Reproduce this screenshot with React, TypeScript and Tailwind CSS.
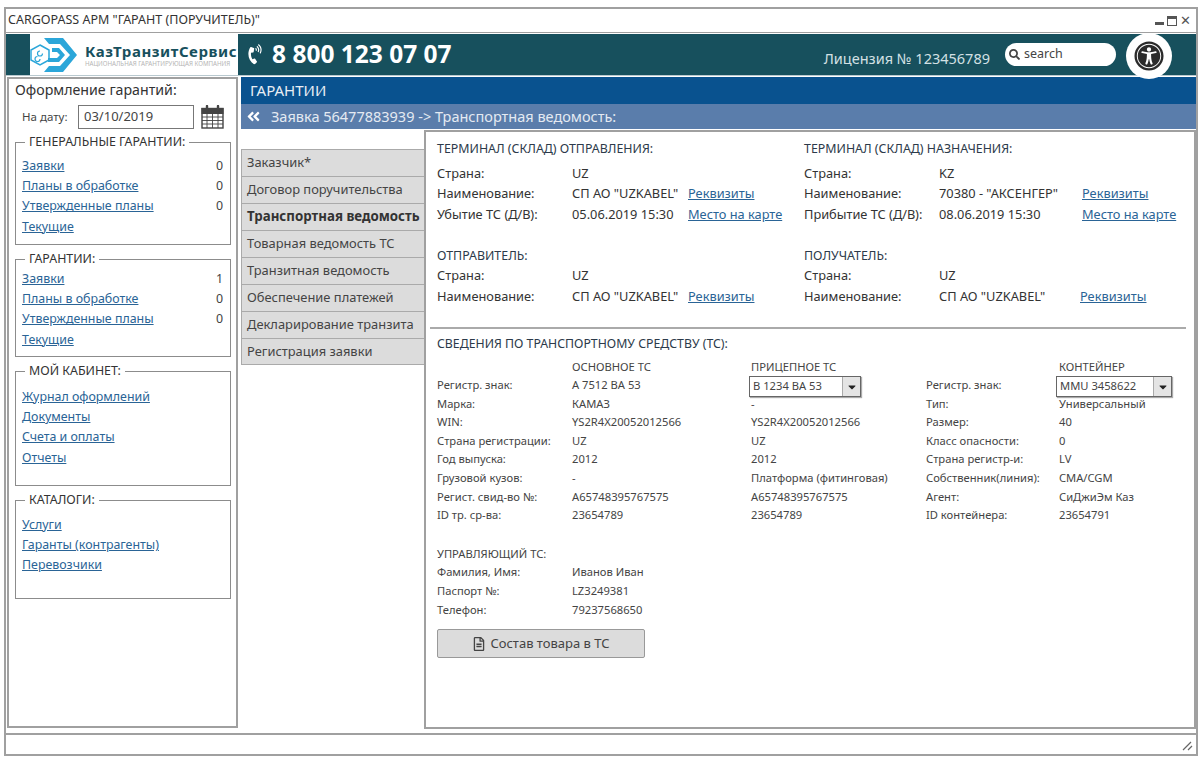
import { FaCaretDown, FaAngleDoubleLeft, FaPhoneVolume, FaRegFileAlt, FaSearch, FaUniversalAccess } from "react-icons/fa";

const linkClass = "whitespace-nowrap text-[#2a6496] underline";

const sideGroups = [
  {
    title: "ГЕНЕРАЛЬНЫЕ ГАРАНТИИ:",
    height: "h-[111px]",
    listPad: "pt-[6px]",
    items: [
      { label: "Заявки", count: "0" },
      { label: "Планы в обработке", count: "0" },
      { label: "Утвержденные планы", count: "0" },
      { label: "Текущие" },
    ],
  },
  {
    title: "ГАРАНТИИ:",
    height: "h-[106px]",
    listPad: "pt-[2px]",
    items: [
      { label: "Заявки", count: "1" },
      { label: "Планы в обработке", count: "0" },
      { label: "Утвержденные планы", count: "0" },
      { label: "Текущие" },
    ],
  },
  {
    title: "МОЙ КАБИНЕТ:",
    height: "h-[123px]",
    listPad: "pt-[8px]",
    items: [{ label: "Журнал оформлений" }, { label: "Документы" }, { label: "Счета и оплаты" }, { label: "Отчеты" }],
  },
  {
    title: "КАТАЛОГИ:",
    height: "h-[107px]",
    listPad: "pt-[7px]",
    items: [{ label: "Услуги" }, { label: "Гаранты (контрагенты)" }, { label: "Перевозчики" }],
  },
];

const tabs = [
  "Заказчик*",
  "Договор поручительства",
  "Транспортная ведомость",
  "Товарная ведомость ТС",
  "Транзитная ведомость",
  "Обеспечение платежей",
  "Декларирование транзита",
  "Регистрация заявки",
];

const vehicleRows = [
  ["Марка:", "КАМАЗ", "-", "Тип:", "Универсальный"],
  ["WIN:", "YS2R4X20052012566", "YS2R4X20052012566", "Размер:", "40"],
  ["Страна регистрации:", "UZ", "UZ", "Класс опасности:", "0"],
  ["Год выпуска:", "2012", "2012", "Страна регистр-и:", "LV"],
  ["Грузовой кузов:", "-", "Платформа (фитинговая)", "Собственник(линия):", "CMA/CGM"],
  ["Регист. свид-во №:", "A65748395767575", "A65748395767575", "Агент:", "СиДжиЭм Каз"],
  ["ID тр. ср-ва:", "23654789", "23654789", "ID контейнера:", "23654791"],
];

function Logo() {
  return (
    <svg width="47" height="34" viewBox="0 0 47 34" fill="none" className="shrink-0">
      <path d="M10 7 L19 12 V22 L10 27 L1 22 V12 Z" stroke="#2ba6d9" strokeWidth="1.5" />
      <path d="M10 13 a2.5 2.5 0 1 0 2.5 2.5 M10 21 a2.5 2.5 0 1 1 -2.5 -2.5" stroke="#2ba6d9" strokeWidth="1.2" />
      <path d="M14 0 H33 L47 17 L33 34 H14 L19 28 H30 L40 17 L30 6 H19 Z" fill="#2ba6d9" />
      <path d="M22 10 H29 L35 17 L29 24 H18 V20 H27 L30 17 L27 14 H22 Z" fill="#2ba6d9" />
    </svg>
  );
}

function CalendarIcon() {
  return (
    <svg width="23" height="24" viewBox="0 0 23 24" fill="none" stroke="#444" className="ml-[7px] shrink-0">
      <rect x="1" y="3.5" width="21" height="19.5" strokeWidth="1.4" />
      <rect x="1" y="3.5" width="21" height="5" fill="#444" />
      <path d="M6 1 V6 M17 1 V6" strokeWidth="2.4" strokeLinecap="round" />
      <path d="M1 12 H22 M1 15.5 H22 M1 19 H22 M6 8 V23 M11.5 8 V23 M17 8 V23" strokeWidth="0.9" />
    </svg>
  );
}

function SideGroup({ title, height, listPad, items }: (typeof sideGroups)[number]) {
  return (
    <fieldset className={`${height} border border-[#8c8c8c] pl-[6px] pr-[7px]`}>
      <legend className="ml-[3px] px-[4px] text-[12.4px] leading-[16px] text-[#333]">{title}</legend>
      <div className={`flex flex-col ${listPad}`}>
        {items.map((item) => (
          <div key={item.label} className="flex h-[20.3px] items-center justify-between text-[12.4px]">
            <a className={linkClass}>{item.label}</a>
            {item.count && <span className="text-[#444]">{item.count}</span>}
          </div>
        ))}
      </div>
    </fieldset>
  );
}

function InfoBlock({
  title,
  rows,
  valueWidth,
  titleGap,
}: {
  title: string;
  valueWidth: string;
  titleGap: string;
  rows: { label: string; value: string; link?: string }[];
}) {
  return (
    <div className="w-[367px] shrink-0">
      <div className={`${titleGap} h-[21px] text-[12.4px] leading-[21px] text-[#2c3a4a]`}>{title}</div>
      {rows.map((row) => (
        <div key={row.label} className="flex h-[20.5px] items-center whitespace-nowrap text-[12.8px] text-[#333]">
          <span className="w-[135px] shrink-0">{row.label}</span>
          <span className={`${valueWidth} shrink-0`}>{row.value}</span>
          {row.link && <a className={linkClass}>{row.link}</a>}
        </div>
      ))}
    </div>
  );
}

function SelectBox({ value, width }: { value: string; width: string }) {
  return (
    <div className={`${width} flex h-[21px] items-center border border-[#666] bg-white pl-[3px] shadow-[1px_1px_1px_#aaa]`}>
      <span className="flex-1 text-[11.2px]">{value}</span>
      <span className="flex h-full w-[18px] items-center justify-center border-l border-[#aaa] bg-[#e4e4e4] text-[#222]">
        <FaCaretDown size={12} />
      </span>
    </div>
  );
}

export default function App() {
  return (
    <div className="h-[759px] w-[1200px] overflow-hidden bg-white pl-[4px] pt-[7px] font-['Noto_Sans','Liberation_Sans',sans-serif]">
      <div className="relative flex h-[749px] w-[1194px] flex-col border-2 border-[#a0a0a0]">
        {/* Title bar */}
        <div className="flex h-[24px] items-center justify-between border-b border-[#a0a0a0] pl-[2px] pr-[5px] text-[12.5px] text-[#333]">
          <span>CARGOPASS АРМ "ГАРАНТ (ПОРУЧИТЕЛЬ)"</span>
          <div className="flex items-center gap-[3px] text-[#555]">
            <span className="mt-[6px] h-[3px] w-[9px] bg-[#555]" />
            <span className="h-[10px] w-[10px] border border-[#555] border-t-[3px]" />
            <span className="text-[13px] leading-none">✕</span>
          </div>
        </div>

        {/* Header */}
        <div className="mt-[1px] flex h-[42px] border-b border-[#b9c9cf] bg-[#17505d] text-white">
          <div className="ml-[24px] flex w-[208px] items-center gap-[8px] bg-white">
            <Logo />
            <div className="min-w-0 whitespace-nowrap">
              <div className="text-[15px] font-bold leading-[17px] tracking-[0.55px] text-[#17505d]">КазТранзитСервис</div>
              <div className="text-[6.2px] leading-[7px] text-[#b5b5b5]">НАЦИОНАЛЬНАЯ ГАРАНТИРУЮЩАЯ КОМПАНИЯ</div>
            </div>
          </div>
          <div className="ml-[8px] flex items-center gap-[7px]">
            <FaPhoneVolume size={19} className="-rotate-12" />
            <span className="text-[24.5px] font-bold leading-none">8 800 123 07 07</span>
          </div>
          <span className="ml-auto mr-[15px] mt-[14px] text-[14.5px] leading-[20px] text-[#d3e0e4]">Лицензия № 123456789</span>
          <div className="mr-[80px] mt-[9px] flex h-[23px] w-[111px] items-center gap-[4px] rounded-full bg-white pl-[4px] text-[12.5px] text-[#444]">
            <FaSearch size={11} />
            search
          </div>
        </div>

        {/* Accessibility button sits over the header edges */}
        <div className="absolute right-[24px] top-[24px] flex h-[46px] w-[46px] items-center justify-center rounded-full bg-white text-[#2b2b2b]">
          <FaUniversalAccess size={30} />
        </div>

        {/* Body */}
        <div className="mt-[1px] flex min-h-0 flex-1">
          {/* Sidebar */}
          <div className="ml-[1px] flex h-[651px] w-[231px] flex-col border-2 border-[#a0a0a0] pl-[6px] pr-[5px]">
            <div className="-mt-[1px] text-[14.2px] leading-[24px] text-[#333]">Оформление гарантий:</div>
            <div className="mt-[3px] flex h-[24px] items-center">
              <span className="ml-[7px] w-[56px] text-[11.5px] text-[#444]">На дату:</span>
              <span className="flex h-[24px] w-[116px] items-center border border-[#777] pl-[5px] text-[13px] text-[#444]">03/10/2019</span>
              <CalendarIcon />
            </div>
            <div className="mt-[5px] flex flex-col gap-[6px]">
              {sideGroups.map((group) => (
                <SideGroup key={group.title} {...group} />
              ))}
            </div>
          </div>

          <div className="ml-[3px] flex min-w-0 flex-1 flex-col">
            <div className="flex h-[27px] items-center bg-[#09528f] pl-[9px] text-[15px] text-[#e8eef4]">ГАРАНТИИ</div>
            <div className="flex h-[25px] items-center gap-[10px] bg-[#5a7dab] pl-[5px] text-[14.5px] text-[#e4eaf2]">
              <FaAngleDoubleLeft size={15} className="text-white" />
              Заявка 56477883939 -&gt; Транспортная ведомость:
            </div>

            <div className="flex min-h-0 flex-1 pt-[1px]">
              {/* Step tabs */}
              <div className="w-[183px] pt-[19px]">
                {tabs.map((tab) => (
                  <div
                    key={tab}
                    className={`flex h-[27px] items-center whitespace-nowrap border border-b-0 border-r-0 border-[#aaa] bg-[#dcdcdc] pl-[5px] last:border-b ${
                      tab === "Транспортная ведомость" ? "text-[13.3px] font-bold text-[#333]" : "text-[12.9px] text-[#444]"
                    }`}
                  >
                    {tab}
                  </div>
                ))}
              </div>

              {/* Main panel */}
              <div className="mb-[4px] flex-1 border-2 border-[#a0a0a0] pl-[11px] pt-[6px]">
                <div className="flex">
                  <InfoBlock
                    title="ТЕРМИНАЛ (СКЛАД) ОТПРАВЛЕНИЯ:"
                    titleGap="mb-[4px]"
                    valueWidth="w-[116px]"
                    rows={[
                      { label: "Страна:", value: "UZ" },
                      { label: "Наименование:", value: 'СП АО "UZKABEL"', link: "Реквизиты" },
                      { label: "Убытие ТС (Д/В):", value: "05.06.2019 15:30", link: "Место на карте" },
                    ]}
                  />
                  <InfoBlock
                    title="ТЕРМИНАЛ (СКЛАД) НАЗНАЧЕНИЯ:"
                    titleGap="mb-[4px]"
                    valueWidth="w-[143px]"
                    rows={[
                      { label: "Страна:", value: "KZ" },
                      { label: "Наименование:", value: '70380 - "АКСЕНГЕР"', link: "Реквизиты" },
                      { label: "Прибытие ТС (Д/В):", value: "08.06.2019 15:30", link: "Место на карте" },
                    ]}
                  />
                </div>
                <div className="mt-[20px] flex">
                  <InfoBlock
                    title="ОТПРАВИТЕЛЬ:"
                    titleGap="mb-0"
                    valueWidth="w-[116px]"
                    rows={[
                      { label: "Страна:", value: "UZ" },
                      { label: "Наименование:", value: 'СП АО "UZKABEL"', link: "Реквизиты" },
                    ]}
                  />
                  <InfoBlock
                    title="ПОЛУЧАТЕЛЬ:"
                    titleGap="mb-0"
                    valueWidth="w-[141px]"
                    rows={[
                      { label: "Страна:", value: "UZ" },
                      { label: "Наименование:", value: 'СП АО "UZKABEL"', link: "Реквизиты" },
                    ]}
                  />
                </div>

                <div className="-ml-[7px] mr-[8px] mt-[20px] border-t-2 border-[#aaa]" />

                <div className="mt-[4px] h-[21px] text-[12.3px] leading-[21px] text-[#2c3a4a]">СВЕДЕНИЯ ПО ТРАНСПОРТНОМУ СРЕДСТВУ (ТС):</div>

                <div className="mt-[4px] grid grid-cols-[135px_179px_175px_133px_1fr] text-[11.2px] leading-[18.6px] text-[#444]">
                  <span />
                  <span>ОСНОВНОЕ ТС</span>
                  <span>ПРИЦЕПНОЕ ТС</span>
                  <span />
                  <span>КОНТЕЙНЕР</span>

                  <span>Регистр. знак:</span>
                  <span>A 7512 BA 53</span>
                  <span className="-ml-[2px] h-[18.6px]">
                    <SelectBox value="B 1234 BA 53" width="w-[112px]" />
                  </span>
                  <span>Регистр. знак:</span>
                  <span className="-ml-[3px] h-[18.6px]">
                    <SelectBox value="MMU 3458622" width="w-[116px]" />
                  </span>

                  {vehicleRows.map((row) => row.map((cell, i) => <span key={`${row[0]}-${i}`}>{cell}</span>))}
                </div>

                <div className="mt-[20px] text-[11.2px] leading-[18.6px] text-[#444]">
                  <div>УПРАВЛЯЮЩИЙ ТС:</div>
                  {[
                    ["Фамилия, Имя:", "Иванов Иван"],
                    ["Паспорт №:", "LZ3249381"],
                    ["Телефон:", "79237568650"],
                  ].map(([label, value]) => (
                    <div key={label} className="flex">
                      <span className="w-[135px]">{label}</span>
                      <span>{value}</span>
                    </div>
                  ))}
                </div>

                <button className="mt-[10px] flex h-[29px] w-[208px] items-center justify-center gap-[4px] rounded-[2px] border border-[#999] bg-[#dcdcdc] text-[13px] text-[#444]">
                  <FaRegFileAlt size={14} />
                  Состав товара в ТС
                </button>
              </div>
            </div>
          </div>
        </div>

        {/* Status bar */}
        <div className="flex h-[21px] items-center justify-end border-t-2 border-[#a0a0a0] pr-[3px]">
          <svg width="12" height="12" viewBox="0 0 12 12" stroke="#666" strokeWidth="1.2">
            <path d="M2 11 L10 3 M7 11 L11 7" />
          </svg>
        </div>
      </div>
    </div>
  );
}
